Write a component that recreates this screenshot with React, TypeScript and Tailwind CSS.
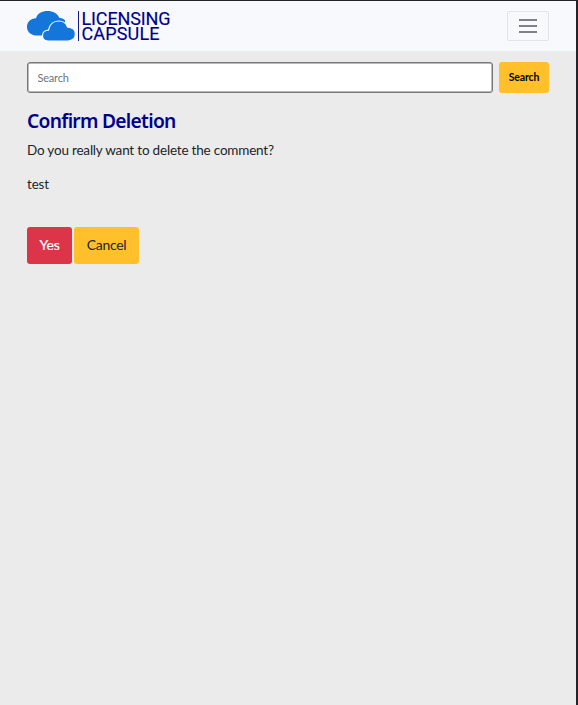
import React from "react";

function Logo() {
  return (
    <div className="flex h-[32px] items-center" aria-label="Licensing Capsule">
      <svg width="49" height="32" viewBox="0 0 49 32" aria-hidden="true">
        <g fill="#1476db">
          <path d="M8.5 25.500C3.500 25 0 21.500 0 17c0-5 3.800-8.600 9-8.800C10.500 3.500 15 1 20.500 1c5.500 0 10 2.500 12 7 2-.3 4.500.7 5.500 2.500V24l-12 1.500z" />
          <path
            d="M21 31c-3.500 0-5.500-2.300-5.500-5.200 0-3.300 2.300-5.700 6-5.700C22.500 14.500 26.500 11 31.500 11c4.600 0 8 2.300 9 6.200 4.600.2 7.900 2.800 7.900 6.800S45.500 31 41 31z"
            stroke="#f8f9fc"
            strokeWidth="1.200"
          />
        </g>
      </svg>
      <span className="ml-[2px] h-[30px] w-px bg-[#17178e]" />
      <div className="ml-[2.500px] flex flex-col font-[Roboto,'Liberation_Sans',sans-serif] text-[18px] leading-[15px] text-[#00008b] [-webkit-text-stroke:0.150px_#00008b]">
        <span className="h-[15px] tracking-[-0.130px]">LICENSING</span>
        <span className="h-[15px] tracking-[0.150px]">CAPSULE</span>
      </div>
    </div>
  );
}

function Header() {
  return (
    <header className="flex h-[50px] items-center justify-between bg-[#f8f9fc] px-[27px]">
      <Logo />
      <button
        aria-label="Menu"
        className="flex h-[30px] w-[42px] flex-col items-center justify-center gap-[4.500px] rounded-[2px] border border-[#e3e4e7]"
      >
        <span className="h-[1.500px] w-[18px] bg-[#808184]" />
        <span className="h-[1.500px] w-[18px] bg-[#808184]" />
        <span className="h-[1.500px] w-[18px] bg-[#808184]" />
      </button>
    </header>
  );
}

export default function App() {
  return (
    <div className="h-[705px] w-[578px] overflow-hidden border-t border-r-2 border-[#242428] bg-[#ebebeb] font-[Lato,'Liberation_Sans',sans-serif] text-[#212529]">
      <Header />
      <main className="px-[27px] pt-[11px]">
        <form className="flex gap-[6px]" onSubmit={(e) => e.preventDefault()}>
          <input
            placeholder="Search"
            className="h-[31px] w-[466px] rounded-[3px] border border-[#777777] bg-white px-[9.500px] text-[11px] tracking-[-0.200px] shadow-[inset_0_0_0_0.500px_#777777] outline-none placeholder:text-[#6c757d]"
          />
          <button className="h-[31px] w-[50px] rounded-[3px] bg-[#ffc02b] text-[10.500px] font-bold tracking-[-0.150px] text-black">
            Search
          </button>
        </form>
        <h1 className="mt-[16px] h-[24px] origin-left scale-x-[0.961] font-['Noto_Sans','Open_Sans',sans-serif] text-[20px] leading-[24px] font-semibold tracking-[-0.750px] whitespace-nowrap text-[#00008b]">
          Confirm Deletion
        </h1>
        <p className="mt-[7px] origin-left scale-x-[0.964] text-[14px] leading-[20px] tracking-[-0.200px] whitespace-nowrap">
          Do you really want to delete the comment?
        </p>
        <p className="mt-[14px] origin-left scale-x-[0.950] text-[14px] leading-[20px] tracking-[-0.100px]">test</p>
        <div className="mt-[33px] flex gap-[2px] text-[14px]">
          <button className="h-[37px] w-[45px] rounded-[3px] bg-[#dc3549] pb-[2px] tracking-[-0.200px] text-white [-webkit-text-stroke:0.200px_white]">
            Yes
          </button>
          <button className="h-[37px] w-[65px] rounded-[3px] bg-[#ffc02b] pb-[2px] tracking-[-0.350px]">Cancel</button>
        </div>
      </main>
    </div>
  );
}
